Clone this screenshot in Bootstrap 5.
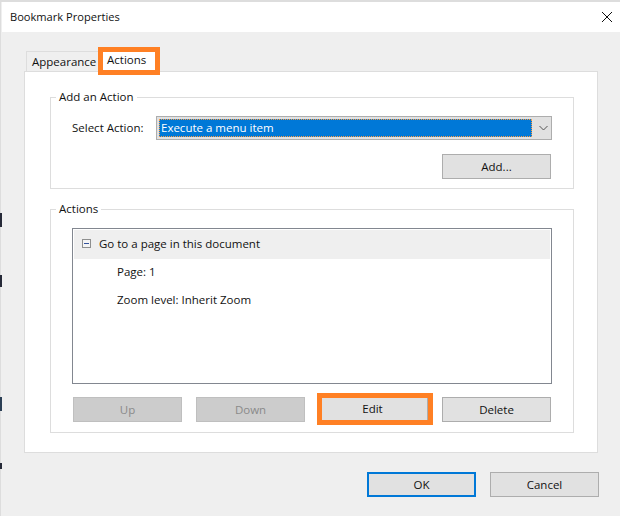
<!DOCTYPE html>
<html lang="en">
<head>
<meta charset="utf-8">
<title>Bookmark Properties</title>
<link href="https://cdn.jsdelivr.net/npm/bootstrap@5.3.0/dist/css/bootstrap.min.css" rel="stylesheet">
<style>
html, body { height: 516px; overflow: hidden; }
body { background: #efefef; font: 11.5px/16px "Open Sans", sans-serif; color: #111; }
.dlg { height: 516px; width: 620px; padding-left: 2px; border-top: 2px solid #ddd;
  background:
    linear-gradient(to bottom, transparent 211px, #262a38 211px 225px, transparent 225px 273px, #262a38 273px 285px, transparent 285px 395px, #2b3f55 395px 409px, transparent 409px 461px, #262a38 461px 467px, transparent 467px) 0 0 / 2px 100% no-repeat,
    linear-gradient(#ddd, #ddd) 0 0 / 1px 100% no-repeat; }
.dlg-title { height: 30px; padding: 0 7px 0 8px; background: #fff; font-size: 11.1px; }
.dlg-body { padding: 15px 21px 0 22px; }
.tabstrip { height: 24px; }
.tab-off { width: 72px; height: 20px; margin: 4px 0 0 2px; padding: 2px 0 0 5px; border: 1px solid #ddd; border-width: 1px 0 0 1px; }
.tab-on { width: 62px; height: 28px; margin-bottom: -4px; padding: 0 0 0 4px; background: #fff; border: 5px solid #ff8024; position: relative; z-index: 1; }
.tabpane { width: 574px; height: 382px; padding: 17px 23px 0 25px; background: #fff; border: 1px solid #ddd; }
.grp { margin: 0; padding: 0 21px; border: 1px solid #ddd; min-width: 0; }
.grp legend { float: none; width: auto; margin: 0 0 0 -16px; padding: 0 3px; font-size: 11.5px; line-height: 16px; }
.grp-a { height: 100px; margin-bottom: 12px; }
.grp-b { height: 232px; }
.sel-row { padding-top: 11px; }
.sel-label { width: 84px; }
.combo { width: 396px; height: 24px; padding: 2px; background: #e1e1e1; border: 1px solid #adadad; }
.combo-val { flex: 1; padding-left: 2px; background: #0078d7; color: #fff; outline: 1px dotted #ff9a3c; outline-offset: -1px; line-height: 18px; }
.combo-arrow { width: 17px; padding-left: 5px; }
.winbtn { width: 109px; height: 25px; padding: 0; background: #e1e1e1; border: 1px solid #adadad; border-radius: 0; color: #111; font-size: 11.5px; line-height: 21px; }
.winbtn:disabled { background: #ccc; border-color: #bfbfbf; color: #8a8a8a; opacity: 1; }
.winbtn-main { border: 2px solid #0078d7; }
.add-row { padding: 14px 1px 0 0; }
.tree { width: 480px; height: 156px; margin-top: 11px; padding: 1px; border: 1px solid #828790; }
.tree-head { height: 29px; padding: 0 0 2px 8px; background: #efefef; }
.tree-item { height: 28px; padding: 0 0 2px 43px; }
.btn-row { padding: 13px 0 0 1px; }
.btn-down { margin-left: 14px; }
.flagged { width: 116px; height: 32px; margin: -4px 9px -3px 12px; border: 5px solid #ff8024; }
.flagged .winbtn { display: block; width: 106px; height: 22px; padding-right: 4px; line-height: 20px; border-width: 0 1px 0 0; }
.foot { width: 232px; padding-top: 19px; margin-left: 343px; }
</style>
</head>
<body>
<div class="dlg d-flex flex-column">
  <div class="dlg-title d-flex align-items-center justify-content-between">
    <span>Bookmark Properties</span>
    <svg width="12" height="12" viewBox="0 0 12 12" aria-label="Close"><path d="M1 1L11 11M11 1L1 11" stroke="#111" stroke-width="1" fill="none"/></svg>
  </div>
  <div class="dlg-body">
    <div class="tabstrip d-flex">
      <div class="tab-off">Appearance</div>
      <div class="tab-on">Actions</div>
    </div>
    <div class="tabpane">
      <fieldset class="grp grp-a">
        <legend>Add an Action</legend>
        <div class="sel-row d-flex align-items-center">
          <span class="sel-label">Select Action:</span>
          <div class="combo d-flex">
            <div class="combo-val">Execute a menu item</div>
            <div class="combo-arrow d-flex align-items-center justify-content-center">
              <svg width="9" height="6" viewBox="0 0 9 6"><path d="M.5 1L4.5 5L8.5 1" stroke="#555" fill="none"/></svg>
            </div>
          </div>
        </div>
        <div class="add-row d-flex justify-content-end">
          <button type="button" class="btn winbtn">Add...</button>
        </div>
      </fieldset>
      <fieldset class="grp grp-b">
        <legend>Actions</legend>
        <div class="tree">
          <div class="tree-head d-flex align-items-center gap-2">
            <svg width="9" height="9" viewBox="0 0 9 9"><rect x=".5" y=".5" width="8" height="8" fill="#f4f4f4" stroke="#8e8f8f"/><path d="M2 4.5H7" stroke="#33539c"/></svg>
            <span>Go to a page in this document</span>
          </div>
          <div class="tree-item d-flex align-items-center">Page: 1</div>
          <div class="tree-item d-flex align-items-center">Zoom level: Inherit Zoom</div>
        </div>
        <div class="btn-row d-flex">
          <button type="button" class="btn winbtn" disabled>Up</button>
          <button type="button" class="btn winbtn btn-down" disabled>Down</button>
          <div class="flagged"><button type="button" class="btn winbtn">Edit</button></div>
          <button type="button" class="btn winbtn">Delete</button>
        </div>
      </fieldset>
    </div>
    <div class="foot d-flex justify-content-between">
      <button type="button" class="btn winbtn winbtn-main flex-shrink-0">OK</button>
      <button type="button" class="btn winbtn flex-shrink-0">Cancel</button>
    </div>
  </div>
</div>
</body>
</html>
